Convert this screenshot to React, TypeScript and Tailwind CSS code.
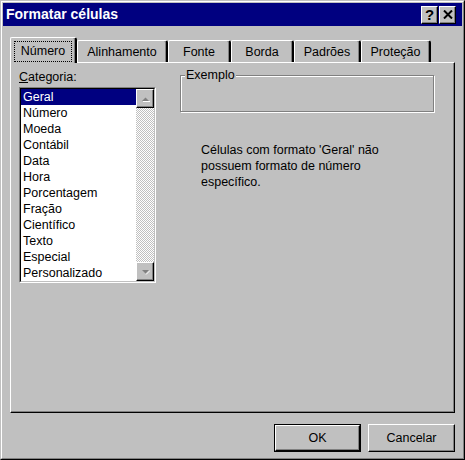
import React from 'react'

const categorias = [
    'Geral',
    'Número',
    'Moeda',
    'Contábil',
    'Data',
    'Hora',
    'Porcentagem',
    'Fração',
    'Científico',
    'Texto',
    'Especial',
    'Personalizado',
]

const abas = [
    { nome: 'Número', largura: 'w-[67px]', ativa: true },
    { nome: 'Alinhamento', largura: 'w-[91px]', ativa: false },
    { nome: 'Fonte', largura: 'w-[63px]', ativa: false },
    { nome: 'Borda', largura: 'w-[63px]', ativa: false },
    { nome: 'Padrões', largura: 'w-[67px]', ativa: false },
    { nome: 'Proteção', largura: 'w-[70px]', ativa: false },
]

const raised = 'border border-t-white border-l-white border-r-black border-b-black shadow-[inset_-1px_-1px_#808080]'

const Seta = ({ up }: { up?: boolean }) => (
    <svg width="9" height="6" viewBox="0 0 9 6">
        {up ? (
            <>
                <polygon points="1,5 8,5 4.5,1.5" fill="#808080" />
                <line x1="2" y1="5.5" x2="9" y2="5.5" stroke="#fff" strokeWidth="1" />
            </>
        ) : (
            <>
                <polygon points="1,1 8,1 4.5,4.5" fill="#808080" />
                <line x1="5" y1="5.5" x2="9" y2="1.5" stroke="#fff" strokeWidth="1" />
            </>
        )}
    </svg>
)

const App = () => {
    return (
        <div className="w-[465px] h-[460px] bg-[#c0c0c0] border border-t-[#c0c0c0] border-l-[#c0c0c0] border-r-black border-b-black font-['Liberation_Sans',Arial,sans-serif] text-[12.5px] text-black select-none">
            <div className="h-full border border-t-white border-l-white border-r-[#808080] border-b-[#808080] p-px flex flex-col">
                {/* barra de título */}
                <div className="h-[23px] bg-[#000080] flex items-center pl-[3px] pr-[6px]">
                    <span className="text-white font-bold text-[14px]">Formatar células</span>
                    <div className="ml-auto flex gap-[1px]">
                        <div className={`w-[17px] h-[18px] bg-[#c0c0c0] flex items-center justify-center ${raised}`}>
                            <span className="font-bold text-[15px] leading-none">?</span>
                        </div>
                        <div className={`w-[17px] h-[18px] bg-[#c0c0c0] flex items-center justify-center ${raised}`}>
                            <svg width="10" height="9" viewBox="0 0 10 9">
                                <path d="M1 0.5 L9 8.5 M9 0.5 L1 8.5" stroke="#000" strokeWidth="2" />
                            </svg>
                        </div>
                    </div>
                </div>

                <div className="flex-1 flex flex-col px-[7px]">
                    {/* abas */}
                    <div className="mt-[11px] h-[25px] flex items-end">
                        {abas.map((aba) =>
                            aba.ativa ? (
                                <div
                                    key={aba.nome}
                                    className={`${aba.largura} h-[26px] -mb-px relative z-10 bg-[#c0c0c0] border-l border-t border-white border-r-2 border-r-black rounded-tl-[2px] rounded-tr-[3px] shadow-[inset_-1px_0_#808080] pt-[3px] px-[3px]`}
                                >
                                    <div className="h-[21px] border border-dotted border-black flex items-center justify-center">
                                        Número
                                    </div>
                                </div>
                            ) : (
                                <div
                                    key={aba.nome}
                                    className={`${aba.largura} h-[22px] bg-[#c0c0c0] border-l border-t border-white border-r-2 border-r-black rounded-tl-[2px] rounded-tr-[3px] shadow-[inset_-1px_0_#808080] flex items-center justify-center pt-px`}
                                >
                                    {aba.nome}
                                </div>
                            )
                        )}
                    </div>

                    {/* painel */}
                    <div className="h-[351px] border border-t-white border-l-white border-r-black border-b-black shadow-[inset_-1px_-1px_#808080] flex pl-[8px] pt-[6px]">
                        <div className="w-[137px] flex flex-col">
                            <div className="h-[16px] leading-[16px]">
                                <span className="underline">C</span>ategoria:
                            </div>
                            <div className="mt-[2px] h-[196px] border border-t-[#808080] border-l-[#808080] border-r-white border-b-white">
                                <div className="h-full border border-t-black border-l-black border-r-[#c0c0c0] border-b-[#c0c0c0] bg-white flex">
                                    <div className="flex-1 flex flex-col">
                                        {categorias.map((c, i) => (
                                            <div
                                                key={c}
                                                className={`h-[16px] leading-[16px] pl-[2px] ${i === 0 ? 'bg-[#000080] text-white' : ''}`}
                                            >
                                                {c}
                                            </div>
                                        ))}
                                    </div>
                                    <div className="w-[18px] flex flex-col bg-[repeating-conic-gradient(#c0c0c0_0_25%,#ffffff_0_50%)] bg-[length:2px_2px]">
                                        <div className={`h-[19px] bg-[#c0c0c0] flex items-center justify-center ${raised}`}>
                                            <Seta up />
                                        </div>
                                        <div className="flex-1" />
                                        <div className={`h-[19px] bg-[#c0c0c0] flex items-center justify-center ${raised}`}>
                                            <Seta />
                                        </div>
                                    </div>
                                </div>
                            </div>
                        </div>

                        <div className="ml-[24px] mt-[6px] flex flex-col">
                            <div className="relative w-[254px] h-[37px] border border-[#808080] shadow-[inset_1px_1px_#fff,1px_1px_#fff]">
                                <span className="absolute left-[4px] -top-[9px] px-px bg-[#c0c0c0] leading-[16px]">Exemplo</span>
                            </div>
                            <p className="mt-[30px] ml-[21px] leading-[16px]">
                                Células com formato 'Geral' não
                                <br />
                                possuem formato de número
                                <br />
                                específico.
                            </p>
                        </div>
                    </div>

                    {/* botões */}
                    <div className="mt-[11px] flex justify-end gap-[7px]">
                        <div className="w-[87px] h-[28px] border border-black">
                            <div className="h-full border border-t-white border-l-white border-r-black border-b-black shadow-[inset_-1px_-1px_#808080] flex items-center justify-center">
                                OK
                            </div>
                        </div>
                        <div className={`w-[87px] h-[28px] flex items-center justify-center ${raised}`}>
                            Cancelar
                        </div>
                    </div>
                </div>
            </div>
        </div>
    )
}

export default App
